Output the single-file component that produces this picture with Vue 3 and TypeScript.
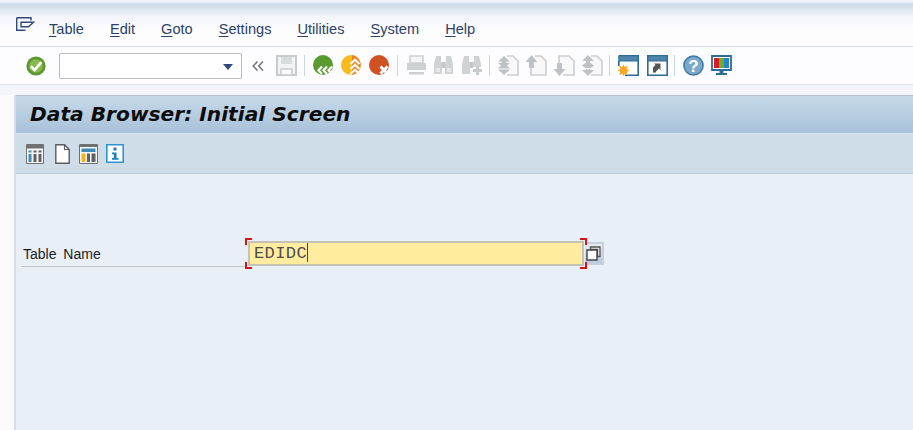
<script setup lang="ts">
const menus = [
  { key: 'T', rest: 'able' },
  { key: 'E', rest: 'dit' },
  { key: 'G', rest: 'oto' },
  { key: 'S', rest: 'ettings' },
  { key: 'U', rest: 'tilities' },
  { key: 'S', rest: 'ystem' },
  { key: 'H', rest: 'elp' },
]
</script>

<template>
  <div class="page">
    <div class="menubar">
      <svg class="sysicon" width="19" height="15" viewBox="0 0 19 15">
        <path d="M.7.7H15V3.500M.7.7V13.300H9.500M5 5.200H17.500L12.500 9.700H5Z" fill="none" stroke="#2f4a7a" stroke-width="1.400" />
      </svg>
      <nav class="menus">
        <span v-for="m in menus" :key="m.rest" class="menu"><u>{{ m.key }}</u>{{ m.rest }}</span>
      </nav>
    </div>

    <div class="toolbar">
      <svg class="ok" width="20" height="20" viewBox="0 0 20 20">
        <circle cx="10" cy="10" r="9.600" fill="#5c9730" />
        <circle cx="10" cy="10" r="6.800" fill="#86b84a" />
        <path d="M4.800 10.200L8.600 14L15.400 6.200" fill="none" stroke="#fff" stroke-width="2.800" />
      </svg>
      <div class="combo"><span class="arrow"></span></div>
      <svg class="chev" width="12" height="10" viewBox="0 0 12 10">
        <path d="M5.500 .5L1.200 5L5.500 9.500M11 .5L6.700 5L11 9.500" fill="none" stroke="#77797c" stroke-width="1.600" />
      </svg>
      <svg class="ic" width="21" height="21" viewBox="0 0 21 21">
        <path d="M1 1H20V20H1Z" fill="#f3f3f3" stroke="#c7cbce" stroke-width="2" />
        <path d="M5 2H16V9H5Z" fill="#d8dbdd" />
        <path d="M5 14H16V20H5Z" fill="#fbfbfb" stroke="#c7cbce" stroke-width="1.500" />
      </svg>
      <i class="sep"></i>
      <svg class="ic" width="21" height="21" viewBox="0 0 21 21">
        <circle cx="10" cy="10" r="10" fill="#5b9a2e" />
        <path d="M9 11.500L5.500 15.200L9 19M14 11.500L10.500 15.200L14 19M19 11.500L15.500 15.200L19 19" fill="none" stroke="#fff" stroke-width="2.200" />
      </svg>
      <svg class="ic" width="21" height="21" viewBox="0 0 21 21">
        <circle cx="10" cy="10" r="10" fill="#f8bb1c" />
        <path d="M11 .1A10 10 0 0 1 11 19.900Z" fill="#e8852b" />
        <path d="M9.500 9L14 4.800L18.500 9M9.500 14L14 9.800L18.500 14M9.500 19L14 14.800L18.500 19" fill="none" stroke="#fff" stroke-width="2.200" />
      </svg>
      <svg class="ic" width="21" height="21" viewBox="0 0 21 21">
        <circle cx="10" cy="10" r="10" fill="#cf5222" />
        <path d="M11.500 11.500L18.500 18.500M18.500 11.500L11.500 18.500" stroke="#fff" stroke-width="3" />
      </svg>
      <i class="sep"></i>
      <svg class="ic" width="21" height="21" viewBox="0 0 21 21">
        <path d="M4 1H17V8H4Z" fill="#f5f5f5" stroke="#cdd0d3" stroke-width="1.600" />
        <path d="M1 8H20V15H1Z" fill="#cdd0d3" />
        <path d="M3 17H18V19.500H3Z" fill="#cdd0d3" />
      </svg>
      <svg class="ic" width="21" height="21" viewBox="0 0 21 21">
        <path d="M2 1H7V7H8V19H0V9Z M12 1H17L19 9V19H11V7H12Z" fill="#d0d3d5" />
        <path d="M8 7H11V13H8Z" fill="#c2c6c8" />
        <path d="M2 13H6V17H2ZM13 13H17V17H13Z" fill="#e6e8e9" />
      </svg>
      <svg class="ic" width="21" height="21" viewBox="0 0 21 21">
        <path d="M2 1H7V7H8V19H0V9Z M12 1H17L19 9V12H11V7H12Z" fill="#d0d3d5" />
        <path d="M8 7H11V13H8Z" fill="#c2c6c8" />
        <path d="M15.500 11V20M11 15.500H20" stroke="#c8cbcd" stroke-width="3.200" />
      </svg>
      <i class="sep back"></i>
      <svg class="ic" width="21" height="21" viewBox="0 0 21 21">
        <path d="M9 1H15L20 6V20H9" fill="#f8f8f8" stroke="#cbced1" stroke-width="1.600" />
        <path d="M6 1L12 6.500H8.500V8H12L6 13.500L0 8H3.500V6.500H0Z M6 8L12 13.500H0Z M6 20L12 14.500H0Z" fill="#bfc2c5" />
      </svg>
      <svg class="ic" width="21" height="21" viewBox="0 0 21 21">
        <path d="M9 1H15L20 6V20H5V11" fill="#f8f8f8" stroke="#cbced1" stroke-width="1.600" />
        <path d="M5.500 0L11.500 7H8V13H3V7H-.5Z" fill="#bfc2c5" />
      </svg>
      <svg class="ic" width="21" height="21" viewBox="0 0 21 21">
        <path d="M5 9V1H15L20 6V20H9" fill="#f8f8f8" stroke="#cbced1" stroke-width="1.600" />
        <path d="M5.500 21L11.500 14H8V8H3V14H-.5Z" fill="#bfc2c5" />
      </svg>
      <svg class="ic" width="21" height="21" viewBox="0 0 21 21">
        <path d="M9 1H15L20 6V20H9" fill="#f8f8f8" stroke="#cbced1" stroke-width="1.600" />
        <path d="M6 0L12 6H8V8H4V6H0Z M6 21L12 15H8V13H4V15H0Z M6 6L12 10.500L6 15L0 10.500Z" fill="#bfc2c5" />
      </svg>
      <i class="sep back"></i>
      <svg class="ic wide" width="21" height="21" viewBox="0 0 21 21">
        <path d="M.8.8H20.200V20.200H7" fill="#fff" stroke="#2d6b97" stroke-width="1.600" />
        <path d="M.8.8H20.200V6H.8Z" fill="#4f86ac" stroke="#2d6b97" />
        <path d="M.8 6V11" stroke="#2d6b97" stroke-width="1.600" />
        <path d="M5.500 9L6.800 12L9.900 10.800L8.600 14L11.500 15.500L8.600 17L9.900 20L6.800 18.800L5.500 21L4.200 18.800L1.100 20L2.400 17L-.5 15.500L2.400 14L1.100 10.800L4.200 12Z" fill="#f7a823" />
      </svg>
      <svg class="ic" width="21" height="21" viewBox="0 0 21 21">
        <path d="M.8.8H20.200V20.200H.8Z" fill="#fff" stroke="#2d6b97" stroke-width="1.600" />
        <path d="M.8.8H20.200V6H.8Z" fill="#4f86ac" stroke="#2d6b97" />
        <path d="M6 17.500V12.500L8.500 10L7 8.500H13.500V15L12 13.500L9 16.500V17.500Z" fill="#555" />
      </svg>
      <i class="sep back"></i>
      <svg class="ic" width="21" height="21" viewBox="0 0 21 21">
        <circle cx="10.500" cy="10.500" r="9.600" fill="#7aa9cc" stroke="#3f78a4" stroke-width="1.500" />
        <text x="10.500" y="16.500" text-anchor="middle" class="q">?</text>
      </svg>
      <svg class="ic" width="21" height="21" viewBox="0 0 21 21">
        <path d="M1 1H20V15H1Z" fill="#fff" stroke="#2d6b97" stroke-width="1.800" />
        <path d="M3 3H8V13H3Z" fill="#d71e28" />
        <path d="M8 3H13V13H8Z" fill="#6cae2e" />
        <path d="M13 3H18V13H13Z" fill="#2a83c4" />
        <path d="M8.500 15H12.500V18H8.500ZM5 18H16V20H5Z" fill="#2d6b97" />
      </svg>
    </div>

    <div class="band"></div>

    <main class="window">
      <h1 class="title">Data Browser: Initial Screen</h1>
      <div class="appbar">
        <svg class="a1" width="18" height="20" viewBox="0 0 18 20">
          <path d="M.5.5H17.500V19.500H.5Z" fill="#f4f6f8" stroke="#707070" />
          <path d="M1 1H17V4.500H1Z" fill="#707070" />
          <path d="M2.500 6.500H5.500V8.500H2.500ZM2.500 10H5.500V18H2.500Z" fill="#3e8ab9" />
          <path d="M7.500 6.500H10.500V8.500H7.500ZM7.500 10H10.500V18H7.500ZM12.500 6.500H15.500V8.500H12.500ZM12.500 10H15.500V18H12.500Z" fill="#616161" />
        </svg>
        <svg class="a2" width="15" height="20" viewBox="0 0 15 20">
          <path d="M.8.8H9.500L14.200 5.500V19.200H.8Z" fill="#fff" stroke="#5c5c5c" stroke-width="1.400" />
          <path d="M9.500.8V5.500H14.200" fill="none" stroke="#5c5c5c" stroke-width="1.200" />
        </svg>
        <svg class="a3" width="19" height="20" viewBox="0 0 19 20">
          <path d="M.5.500H18.500V19.500H.5Z" fill="#f4f6f8" stroke="#707070" />
          <path d="M1 1H18V3H1Z" fill="#707070" />
          <path d="M2.500 4.500H16.500V8H2.500Z" fill="#3e8ab9" />
          <path d="M2.500 9.500H6.500V18H2.500Z" fill="#f4b41e" />
          <path d="M8 9.500H11V18H8ZM12.500 9.500H16.500V18H12.500Z" fill="#616161" />
        </svg>
        <svg width="18" height="19" viewBox="0 0 18 19">
          <path d="M.8.800H17.200V18.200H.8Z" fill="#fff" stroke="#2f93cf" stroke-width="1.600" />
          <path d="M7.500 3.500H10.500V6.500H7.500ZM6 8.500H10.500V14H12.500V15.800H6V14H7.800V10.300H6Z" fill="#1b7fba" />
        </svg>
      </div>
      <section class="form">
        <label class="field-label">Table Name</label>
        <div class="input-wrap">
          <i class="corner tl"></i><i class="corner bl"></i><i class="corner tr"></i><i class="corner br"></i>
          <div class="input">EDIDC<span class="caret"></span></div>
        </div>
        <button class="f4" type="button" aria-label="Possible entries">
          <svg width="15" height="15" viewBox="0 0 15 15">
            <path d="M4.500 1H14V10.500H11.500V3.500H4.500Z" fill="#eee" stroke="#555" stroke-width="1.300" />
            <path d="M1 4H11V14H1Z" fill="#fff" stroke="#444" stroke-width="1.400" />
          </svg>
        </button>
      </section>
    </main>
  </div>
</template>

<style>
html, body { margin: 0; background: #fff; }
</style>

<style scoped>
.page {
  width: 913px;
  height: 430px;
  overflow: hidden;
  font-family: "Liberation Sans", Arial, sans-serif;
  background: #fbfbfd;
  display: flex;
  flex-direction: column;
}
.menubar {
  height: 47px;
  flex: none;
  box-sizing: border-box;
  border-bottom: 1px solid #d8dde6;
  background: linear-gradient(#eff4fa 0, #eff4fa 2px, #cdd9e8 4px, #f2f4f9 16px, #fdfdfe 30px);
  display: flex;
  align-items: flex-start;
  padding: 17px 0 0 16px;
}
.menus {
  display: flex;
  gap: 26px;
  margin: 2px 0 0 14px;
  font-size: 14.600px;
  line-height: 20px;
  color: #2c4167;
}
.menu u { text-underline-offset: 2px; text-decoration-thickness: 1px; }
.toolbar {
  height: 38px;
  flex: none;
  box-sizing: border-box;
  border-bottom: 1px solid #dfe3ec;
  background: #fdfdff;
  display: flex;
  align-items: center;
  padding: 0 0 0 26px;
}
.ic { flex: none; margin-right: 7px; }
.wide { margin-right: 8px; }
.ok { flex: none; margin-right: 13px; }
.combo {
  width: 183px;
  height: 26px;
  box-sizing: border-box;
  border: 1px solid #b9bdc2;
  border-radius: 2px;
  background: #fff;
  position: relative;
}
.arrow {
  position: absolute;
  right: 8px;
  top: 10px;
  border-left: 5px solid transparent;
  border-right: 5px solid transparent;
  border-top: 6px solid #2b4a78;
}
.chev { flex: none; margin: 0 12px 0 10px; }
.sep { flex: none; width: 1px; height: 21px; background: #c6d7e6; margin: 0 8px 0 0; }
.back { margin-left: -1px; }
.band { height: 10px; flex: none; background: #f3f5fb; }
.window {
  flex: 1;
  margin-left: 14px;
  border-left: 2px solid #d9ddea;
  background: #e8eff7;
  display: flex;
  flex-direction: column;
}
.title {
  margin: 0;
  height: 38px;
  flex: none;
  box-sizing: border-box;
  border-top: 1px solid #b9bfd0;
  background: linear-gradient(#c5d9e8, #a9c2da);
  padding-left: 14px;
  font: italic 700 20.200px/36px "DejaVu Sans", sans-serif;
  color: #0d0d0d;
}
.appbar {
  height: 41px;
  flex: none;
  box-sizing: border-box;
  border-top: 1px solid #d9e5ee;
  border-bottom: 1px solid #bfcdd9;
  background: #cfdde8;
  display: flex;
  align-items: center;
  padding: 0 0 0 10px;
}
.a1 { margin-right: 11px; }
.a2 { margin-right: 9px; }
.a3 { margin-right: 8px; }
.form {
  display: flex;
  align-items: flex-start;
  margin-top: 67px;
  padding-left: 5px;
}
.field-label {
  width: 224px;
  height: 26px;
  box-sizing: border-box;
  border-bottom: 1px solid #c4c6c8;
  font-size: 14px;
  word-spacing: 3px;
  line-height: 26px;
  padding-left: 2px;
  color: #1c1c1c;
}
.input-wrap {
  position: relative;
  width: 336px;
  height: 25px;
  margin-left: 3px;
}
.input {
  height: 25px;
  box-sizing: border-box;
  border: 2px solid #c3c2b4;
  background: #ffec9f;
  font: 17px/22px "Liberation Mono", monospace;
  color: #4d4d4d;
  padding-left: 4px;
  letter-spacing: 0.4px;
}
.caret { display: inline-block; width: 1px; height: 19px; background: #444; vertical-align: -4px; }
.corner { position: absolute; width: 5px; height: 5px; border: 0 solid #d8121b; }
.tl { left: -3px; top: -3px; border-width: 2px 0 0 2px; }
.bl { left: -3px; bottom: -3px; border-width: 0 0 2px 2px; }
.tr { right: -3px; top: -3px; border-width: 2px 2px 0 0; }
.br { right: -3px; bottom: -3px; border-width: 0 2px 2px 0; }
.f4 {
  width: 19px;
  height: 23px;
  padding: 0;
  margin: 1px 0 0 1px;
  box-sizing: border-box;
  border: 2px solid #c8cfd8;
  border-left: 0;
  background: linear-gradient(#e4ebf3, #b8cbe0);
  display: flex;
  align-items: center;
  justify-content: center;
}
.q { font: 700 17px "Liberation Sans", sans-serif; fill: #fff; }
</style>
